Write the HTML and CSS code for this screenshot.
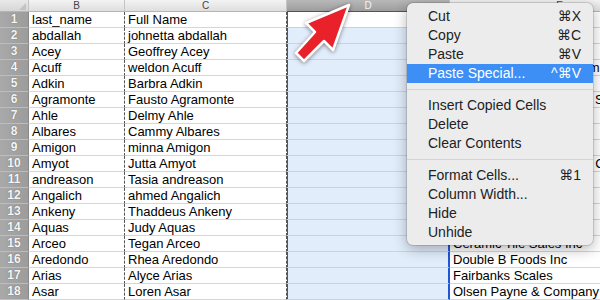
FILE: index.html
```html
<!DOCTYPE html>
<html lang="en">
<head>
  <meta charset="UTF-8" />
  <title>Paste Special</title>
  <link rel="stylesheet" href="styles.css">
</head>
<body>
  <div class="sheet">
    <div class="row head">
      <div class="corner"><span class="tri"></span></div>
      <div class="col-h">B</div>
      <div class="col-h copied">C</div>
      <div class="col-h sel">D</div>
      <div class="col-h">E</div>
    </div>
    <div id="rows"></div>

    <svg class="arrow" width="600" height="300" viewBox="0 0 600 300">
      <polygon points="349,5 333,50 324,41 304,61 296,53 315,32 306,23" />
    </svg>

    <div class="menu">
      <div class="item"><span>Cut</span><span>⌘X</span></div>
      <div class="item"><span>Copy</span><span>⌘C</span></div>
      <div class="item"><span>Paste</span><span>⌘V</span></div>
      <div class="item active"><span>Paste Special...</span><span>^⌘V</span></div>
      <div class="sep"></div>
      <div class="item"><span>Insert Copied Cells</span></div>
      <div class="item"><span>Delete</span></div>
      <div class="item"><span>Clear Contents</span></div>
      <div class="sep"></div>
      <div class="item"><span>Format Cells...</span><span>⌘1</span></div>
      <div class="item"><span>Column Width...</span></div>
      <div class="item"><span>Hide</span></div>
      <div class="item"><span>Unhide</span></div>
    </div>
  </div>

  <script>
    // column E is mostly hidden under the menu, only the long names show past it
    const rows = [
      ["last_name", "Full Name", ""],
      ["abdallah", "johnetta abdallah", ""],
      ["Acey", "Geoffrey Acey", ""],
      ["Acuff", "weldon Acuff", "Printing Dimensions Company"],
      ["Adkin", "Barbra Adkin", ""],
      ["Agramonte", "Fausto Agramonte", "Western Industrial Parts Supply"],
      ["Ahle", "Delmy Ahle", ""],
      ["Albares", "Cammy Albares", ""],
      ["Amigon", "minna Amigon", ""],
      ["Amyot", "Jutta Amyot", "Johnson Electric Supply Co"],
      ["andreason", "Tasia andreason", ""],
      ["Angalich", "ahmed Angalich", ""],
      ["Ankeny", "Thaddeus Ankeny", ""],
      ["Aquas", "Judy Aquas", ""],
      ["Arceo", "Tegan Arceo", "Ceramic Tile Sales Inc"],
      ["Aredondo", "Rhea Aredondo", "Double B Foods Inc"],
      ["Arias", "Alyce Arias", "Fairbanks Scales"],
      ["Asar", "Loren Asar", "Olsen Payne & Company"]
    ];

    const list = document.getElementById("rows");

    rows.forEach((r, i) => {
      const row = document.createElement("div");
      row.className = "row";
      row.innerHTML = `
        <div class="num">${i + 1}</div>
        <div class="cell">${r[0]}</div>
        <div class="cell copied">${r[1]}</div>
        <div class="cell sel${i === 0 ? " active" : ""}"></div>
        <div class="cell wide">${r[2]}</div>
      `;
      list.appendChild(row);
    });
  </script>
</body>
</html>
```

FILE: styles.css
```css
body {
  margin: 0;
  font-family: "Liberation Sans", Arial, sans-serif;
  background: #fff;
  overflow: hidden;
}

.sheet {
  position: relative;
  width: 600px;
  height: 300px;
  overflow: hidden;
}

.row {
  display: grid;
  grid-template-columns: 29px 96px 162px 163px 220px;
  height: 16px;
}

.row.head {
  height: 12px;
}

/* column headers */
.corner,
.col-h {
  box-sizing: border-box;
  height: 12px;
  border-right: 1px solid #c4c4c4;
  border-bottom: 1px solid #b5b5b5;
  background: linear-gradient(#f3f3f3, #dedede);
  font-size: 10px;
  line-height: 11px;
  text-align: center;
  color: #444;
}

.corner {
  position: relative;
  background: linear-gradient(#e9e9e9, #d6d6d6);
}

.tri {
  position: absolute;
  right: 2px;
  bottom: 1px;
  width: 0;
  height: 0;
  border-left: 7px solid transparent;
  border-bottom: 7px solid #c3c3c3;
}

.col-h.sel {
  background: linear-gradient(#b8b8b8, #9d9d9d);
  color: #f4f4f4;
  border-bottom-color: #1f56d6;
}

/* row numbers */
.num {
  box-sizing: border-box;
  height: 16px;
  border-right: 1px solid #8a8a8a;
  border-bottom: 1px solid #bdbdbd;
  background: linear-gradient(90deg, #a9a9a9, #9c9c9c);
  color: #f6f6f6;
  font-size: 12px;
  font-weight: bold;
  line-height: 15px;
  text-align: center;
  text-shadow: 0 0 1px #555;
}

.cell {
  box-sizing: border-box;
  height: 16px;
  padding-left: 3px;
  border-right: 1px solid #d6d6d6;
  border-bottom: 1px solid #d6d6d6;
  font-size: 13px;
  line-height: 15px;
  color: #000;
  white-space: nowrap;
}

.row > .cell:nth-child(2) {
  border-right: 1px dashed #555;
}

.cell.copied {
  border-right: 1px dashed #555;
}

.cell.sel {
  background: #e2edfb;
  border-right: 2px solid #1f56d6;
  border-bottom-color: #c9d3df;
  box-shadow: inset 1px 0 0 #1f56d6;
}

.cell.sel.active {
  background: #fff;
}

.cell.wide {
  overflow: visible;
}

/* red arrow */
.arrow {
  position: absolute;
  left: 0;
  top: 0;
  pointer-events: none;
  filter: drop-shadow(0 1px 2px rgba(0, 0, 0, 0.45));
}

.arrow polygon {
  fill: #e8212b;
  stroke: #fff;
  stroke-width: 2.5;
  stroke-linejoin: round;
}

/* context menu */
.menu {
  position: absolute;
  left: 407px;
  top: 3px;
  width: 186px;
  padding: 4px 0 3px;
  background: #ececec;
  border-radius: 6px;
  box-shadow: 0 4px 14px rgba(0, 0, 0, 0.3), 0 0 0 1px rgba(0, 0, 0, 0.12);
  font-family: "Liberation Sans", "DejaVu Sans", sans-serif;
  font-size: 14px;
  color: #222;
}

.item {
  display: flex;
  justify-content: space-between;
  height: 19px;
  line-height: 19px;
  padding: 0 12px 0 21px;
}

.item.active {
  background: #3d8ef5;
  color: #fff;
}

.sep {
  height: 1px;
  margin: 6px 0;
  background: #d4d4d4;
}
```
